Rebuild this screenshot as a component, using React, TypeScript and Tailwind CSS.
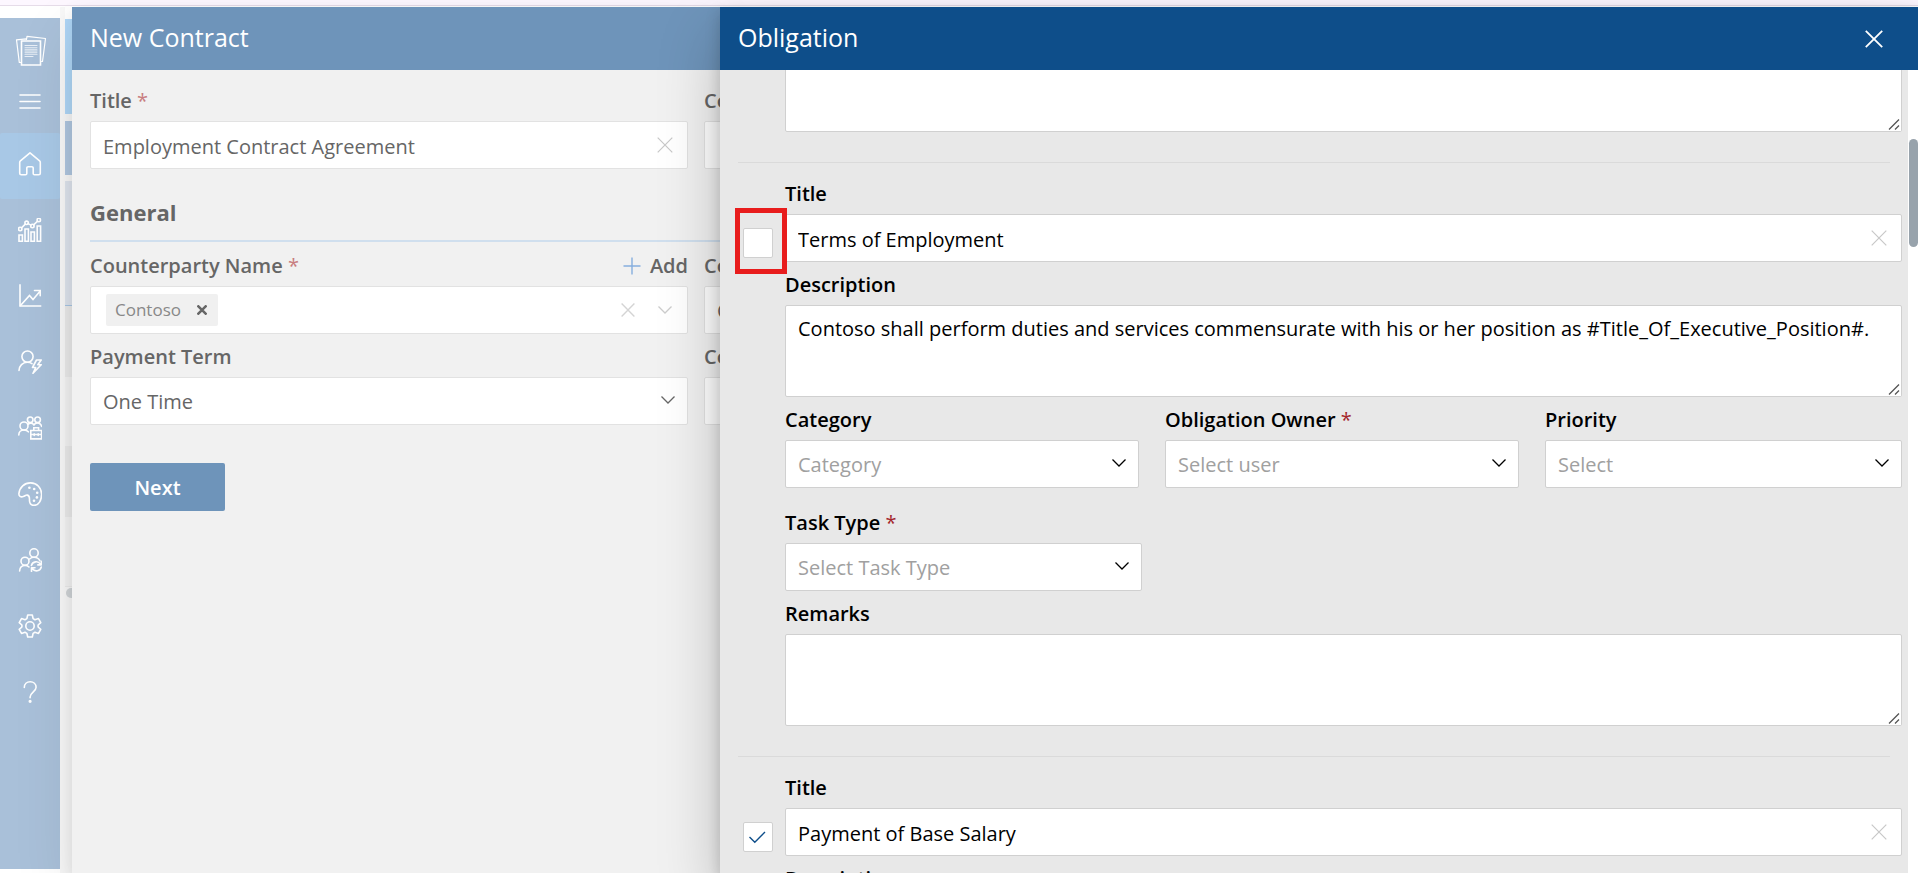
import { useId, type ReactNode } from 'react';

const stroke = {
  fill: 'none',
  stroke: 'currentColor',
  strokeWidth: 1.6,
  strokeLinecap: 'round' as const,
  strokeLinejoin: 'round' as const,
};

function Icon({ children }: { children: ReactNode }) {
  return (
    <svg width="24" height="24" viewBox="0 0 24 24" aria-hidden="true" {...stroke}>
      {children}
    </svg>
  );
}

const navItems: { label: string; icon: ReactNode; active?: boolean }[] = [
  {
    label: 'Home',
    active: true,
    icon: (
      <path d="M12 .8 2.4 8.9a2 2 0 0 0-.7 1.6v10.700a1.6 1.6 0 0 0 1.6 1.6h4.2a1.3 1.3 0 0 0 1.3-1.3v-5.500a1.3 1.3 0 0 1 1.3-1.3h3.800a1.3 1.3 0 0 1 1.3 1.3v5.500a1.3 1.3 0 0 0 1.3 1.3h4.2a1.6 1.6 0 0 0 1.6-1.6V10.500a2 2 0 0 0-.7-1.6Z" />
    ),
  },
  {
    label: 'Analytics',
    icon: (
      <>
        <path d="M1 17h3.4v6.2H1zM7 11h3.4v12.2H7zM13 14h3.4v9.2H13zM19.2 8h3.4v15.2h-3.4z" strokeLinejoin="miter" />
        <circle cx="2.2" cy="11" r="1.7" />
        <circle cx="8.6" cy="4.8" r="1.7" />
        <circle cx="14.4" cy="8" r="1.7" />
        <circle cx="20.8" cy="2" r="1.7" />
        <path d="m3.5 9.8 3.8-3.6M10.1 5.6l2.8 1.5M15.6 6.8l4-3.6" />
      </>
    ),
  },
  {
    label: 'Trends',
    icon: (
      <>
        <path d="M2 1v21h20.500" strokeLinecap="square" strokeLinejoin="miter" />
        <path d="m2.500 21.500 9-10 3.500 4L22 7.200M16.500 6.500h5.700v5.300" strokeLinejoin="miter" />
      </>
    ),
  },
  {
    label: 'User actions',
    icon: (
      <>
        <circle cx="9.5" cy="6.6" r="5.6" />
        <path d="M1 20.5c.2-4.700 3.600-8.300 8.300-8.300 2 0 3.400.5 4.700 1.500" />
        <path d="m18.500 10-4 7.500h3.200L15 23.300l8.200-8.600h-3.400l3.400-4.700z" />
      </>
    ),
  },
  {
    label: 'Team projects',
    icon: (
      <>
        <circle cx="6" cy="10" r="4" />
        <path d="M.8 19c0-3 2.200-5 5.200-5 2 0 3.300.6 4.300 1.800" />
        <circle cx="12.200" cy="3.800" r="2.800" />
        <circle cx="19.600" cy="3.800" r="2.800" />
        <path d="M10 8.200c3-1.800 5-.6 5.900.8 1-1.800 3-2.600 5-1.800 1.600.6 2.500 1.800 2.700 3.200" />
        <path d="M12.800 14.500h10.800v8.400H12.800zM15.800 14.300v-2.600h4.800v2.600M12.800 18.500h10.800M16.200 17.800v1.600M20.200 17.800v1.600" strokeLinejoin="miter" />
      </>
    ),
  },
  {
    label: 'Appearance',
    icon: (
      <>
        <path d="M.9 11.600C1.500 5.200 6.500.8 12.600.9 18.900 1 23.600 6 23.600 12.300c0 5.900-2.900 11.100-7.600 11.100-3.500 0-4.700-2.400-4.500-5.800.1-2.700-.5-4.100-2.100-4.500-1.500-.4-2.400.9-4.200 1.500-2.500.8-4.500-.6-4.300-3Z" />
        <g fill="currentColor" stroke="none">
          <circle cx="11.400" cy="5.700" r="1.300" />
          <circle cx="16.200" cy="7" r="1.300" />
          <circle cx="19.200" cy="10.700" r="1.300" />
          <circle cx="18.900" cy="15.400" r="1.300" />
          <circle cx="16" cy="18.700" r="1.300" />
        </g>
      </>
    ),
  },
  {
    label: 'User sync',
    icon: (
      <>
        <circle cx="7" cy="13.200" r="4" />
        <path d="M1.600 23c.1-3.400 2.400-5.600 5.400-5.600 1.800 0 3 .6 4 1.600" />
        <circle cx="16" cy="5" r="4.200" />
        <path d="M11.600 11c1.200-1.100 2.700-1.700 4.400-1.700 2.700 0 4.800 1.300 6 3.500" />
        <path d="M13.400 17.500a5 5 0 0 1 9-1.400M23.300 13.300v3.600h-3.500M23.300 19a5 5 0 0 1-8.900 1.800M13.500 23.400v-3.600H17" />
      </>
    ),
  },
  {
    label: 'Settings',
    icon: (
      <>
        <path d="M9.700 1h4.600l.8 3.600 1.900 1.100 3.500-1.100 2.300 4-2.700 2.400v2l2.700 2.400-2.300 4-3.500-1.100-1.900 1.100-.8 3.600H9.700l-.8-3.600L7 18.300l-3.500 1.100-2.300-4L3.900 13v-2L1.200 8.600l2.300-4L7 5.700l1.900-1.100z" />
        <circle cx="12" cy="12" r="4.200" />
      </>
    ),
  },
  {
    label: 'Help',
    icon: (
      <>
        <path d="M6.300 7.500C6.300 4 8.900 1.700 12.200 1.700s5.900 2.300 5.900 5.500c0 4.600-6 5.300-6 9.800v.7" />
        <circle cx="12.100" cy="21.300" r=".8" fill="currentColor" />
      </>
    ),
  },
];

function Cross({ size = 16, width = 1.2 }: { size?: number; width?: number }) {
  return (
    <svg width={size} height={size} viewBox="0 0 16 16" fill="none" stroke="currentColor" strokeWidth={width} aria-hidden="true">
      <path d="m.7.7 14.600 14.600M15.300.7.7 15.300" />
    </svg>
  );
}

function Chevron({ className = '' }: { className?: string }) {
  return (
    <svg width="16" height="10" viewBox="0 0 16 10" fill="none" stroke="currentColor" strokeWidth="1.300" className={className} aria-hidden="true">
      <path d="m1.500 1.500 6.500 6.500 6.500-6.500" />
    </svg>
  );
}

function Label({ htmlFor, text, required }: { htmlFor?: string; text: string; required?: boolean }) {
  return (
    <label htmlFor={htmlFor} className="block h-[43px] pt-[9px] text-[20px] leading-[27px] font-semibold whitespace-nowrap">
      {text}
      {required && <span className="font-normal text-[#a4262c]"> *</span>}
    </label>
  );
}

const box = 'w-full rounded-xs border border-[#d0d0d0] bg-white text-[20px] outline-none';

function TextField({ label, value, required }: { label: string; value: string; required?: boolean }) {
  const id = useId();
  return (
    <div>
      <Label htmlFor={id} text={label} required={required} />
      <div className={`${box} flex h-12 items-center`}>
        <input id={id} defaultValue={value} className="h-full min-w-0 flex-1 pt-[2px] pl-3 outline-none" />
        <button type="button" aria-label={`Clear ${label}`} className="mr-[14px] text-[#c8c8c8]">
          <Cross />
        </button>
      </div>
    </div>
  );
}

function SelectField({ label, value, required, muted = true }: { label: string; value: string; required?: boolean; muted?: boolean }) {
  const id = useId();
  return (
    <div>
      <Label htmlFor={id} text={label} required={required} />
      <div className="relative">
        <select id={id} className={`${box} block h-12 appearance-none pt-[2px] pr-10 pl-3 ${muted ? 'text-[#a0a0a0]' : ''}`}>
          <option>{value}</option>
        </select>
        <Chevron className="pointer-events-none absolute top-[18px] right-3" />
      </div>
    </div>
  );
}

function TextArea({ id, label, value = '' }: { id?: string; label?: string; value?: string }) {
  return (
    <div className="relative w-full shrink-0">
      <textarea id={id} aria-label={label} defaultValue={value} className={`${box} block h-[92px] resize-y px-3 py-2 leading-[30px]`} />
      <svg width="14" height="14" viewBox="0 0 14 14" className="pointer-events-none absolute right-px bottom-px bg-white" stroke="#555555" strokeWidth="1.300" aria-hidden="true">
        <path d="M2 12.500 12 2.500M8 12.500 12 8.500" />
      </svg>
    </div>
  );
}

function AreaField({ label, value }: { label: string; value?: string }) {
  const id = useId();
  return (
    <div>
      <Label htmlFor={id} text={label} />
      <TextArea id={id} value={value} />
    </div>
  );
}

function Obligation({ title, description, checked, highlighted }: { title: string; description: string; checked?: boolean; highlighted?: boolean }) {
  return (
    <section className="flex pt-2 pb-[30px]">
      <div className="w-[47px] shrink-0 pt-[57px] pl-[5px]">
        <div className="relative size-[30px]">
          <input
            type="checkbox"
            aria-label={`Include ${title}`}
            defaultChecked={checked}
            className="peer block size-[30px] appearance-none rounded-xs border border-[#d0d0d0] bg-white"
          />
          <svg
            viewBox="0 0 30 30"
            className="pointer-events-none absolute inset-0 hidden size-[30px] fill-none stroke-[#0e4e8a] peer-checked:block"
            strokeWidth="1.400"
            aria-hidden="true"
          >
            <path d="m6.500 15 5.300 5.300L22 10" />
          </svg>
          {highlighted && <div className="pointer-events-none absolute -top-5 -left-2 h-[66px] w-[52px] border-[5px] border-[#e81c1c]" />}
        </div>
      </div>
      <div className="min-w-0 flex-1">
        <TextField label="Title" value={title} />
        <AreaField label="Description" value={description} />
        <div className="grid grid-cols-[354fr_354fr_357fr] gap-x-[26px]">
          <SelectField label="Category" value="Category" />
          <SelectField label="Obligation Owner" value="Select user" required />
          <SelectField label="Priority" value="Select" />
        </div>
        <div className="mt-3 w-[32%]">
          <SelectField label="Task Type" value="Select Task Type" required />
        </div>
        <AreaField label="Remarks" />
      </div>
    </section>
  );
}

function Sidebar() {
  return (
    <nav className="mt-[11px] mb-1 flex w-[60px] shrink-0 flex-col items-center bg-[#a9c0d9] text-white">
      <svg width="32" height="32" viewBox="0 0 32 32" className="mt-[17px] ml-px" aria-hidden="true" {...stroke} strokeWidth="1.200">
        <path d="M6 27.500H4.300L1.500 4.800l9.500-1M11.500 4.500l.5-3.200L30.500 3.500l-3 23H26.500" />
        <path d="M6.500 6h19v24h-19z" strokeWidth="1.600" strokeLinejoin="miter" />
        <path d="M10 10.500h12M10 12.700h12M10 14.900h12M10 17.100h12M10 19.300h12M10 21.500h8" strokeWidth="1.100" strokeOpacity=".75" />
      </svg>
      <button type="button" aria-label="Menu" className="mt-[17px] flex h-[34px] w-full items-center justify-center">
        <svg width="24" height="18" viewBox="0 0 24 18" {...stroke} aria-hidden="true">
          <path d="M2 3h20M2 9.500h20M2 16h20" />
        </svg>
      </button>
      <ul className="mt-[15px] w-full">
        {navItems.map((item) => (
          <li key={item.label}>
            <a
              href="#"
              aria-label={item.label}
              className={`flex h-[66px] items-center justify-center rounded-xs pb-1 ${item.active ? 'bg-[#a8c8e6]' : ''}`}
            >
              <Icon>{item.icon}</Icon>
            </a>
          </li>
        ))}
      </ul>
    </nav>
  );
}

function BackgroundEdge() {
  return (
    <div className="w-3 shrink-0 bg-[#f8f8f8] pl-[5px]" aria-hidden="true">
      <div className="h-3 bg-white" />
      <div className="h-[95px] bg-[#b0d8f8]" />
      <div className="mt-[7px] h-[54px] bg-[#b0c7e1]" />
      <div className="mt-[6px] h-[125px] border-b border-[#a8c6e4] bg-[#dfe5ee]" />
      <div className="h-[71px] bg-[#ebebeb]" />
      <div className="h-[69px] bg-[#f4f4f4]" />
      <div className="h-[71px] bg-[#ebebeb]" />
      <div className="h-[70px] border-b border-[#ebebeb] bg-[#f4f4f4]" />
      <div className="mt-px ml-px h-[10px] rounded-l-full bg-[#d0d4d7]" />
    </div>
  );
}

function ContractPanel() {
  return (
    <section className="z-10 w-[648px] shrink-0 overflow-hidden bg-[#f1f1f1] text-[#666666] shadow-[0_26px_58px_0_rgba(0,0,0,0.1),0_5px_14px_0_rgba(0,0,0,0.09)]">
      <header className="flex h-[63px] items-center bg-[#6e94ba] px-[18px] pb-[2px]">
        <h1 className="text-[25px] whitespace-nowrap text-white">New Contract</h1>
      </header>
      <form className="w-[1230px] pt-2 pl-[18px] [&_.border]:border-[#e2e2e2] [&_label>span]:text-[#c87d80]">
        <div className="grid grid-cols-[598px_598px] gap-x-4">
          <TextField label="Title" value="Employment Contract Agreement" required />
          <TextField label="Contract Type" value="" />
        </div>
        <h2 className="mt-[26px] h-[47px] border-b-2 border-[#d0dfee] text-[22px] leading-[35px] font-bold">General</h2>
        <div className="mt-px grid grid-cols-[598px_598px] gap-x-4">
          <div>
            <div className="flex items-start justify-between">
              <Label text="Counterparty Name" required />
              <button type="button" className="flex items-center gap-[9px] pt-[9px] text-[20px] leading-[27px] font-semibold">
                <svg width="18" height="18" viewBox="0 0 18 18" fill="none" stroke="#86aede" strokeWidth="1.400" aria-hidden="true">
                  <path d="M9 .5v17M.5 9h17" />
                </svg>
                Add
              </button>
            </div>
            <div className={`${box} flex h-12 items-center pr-[14px] pl-[15px]`}>
              <span className="flex h-8 items-center gap-4 rounded-xs bg-[#f0f0f0] px-[9px] text-[17px] text-[#888888]">
                Contoso
                <button type="button" aria-label="Remove Contoso" className="mr-[2px] text-[#666666]">
                  <Cross size={10} width={4} />
                </button>
              </span>
              <button type="button" aria-label="Clear counterparty" className="mr-[22px] ml-auto text-[#d4d4d4]">
                <Cross size={14} width={1.600} />
              </button>
              <Chevron className="text-[#cccccc]" />
            </div>
          </div>
          <SelectField label="Contract Stage" value="Closed" muted={false} />
          <SelectField label="Payment Term" value="One Time" muted={false} />
          <SelectField label="Contract Value" value="" muted={false} />
        </div>
        <button type="submit" className="mt-[38px] h-12 w-[135px] rounded-xs bg-[#6e94ba] pt-[2px] text-[20px] font-semibold text-white">
          Next
        </button>
      </form>
    </section>
  );
}

function ObligationPanel() {
  return (
    <section className="z-20 flex min-w-0 flex-1 flex-col bg-[#e8e8e8] text-black shadow-[0_26px_58px_0_rgba(0,0,0,0.22),0_5px_14px_0_rgba(0,0,0,0.18)]">
      <header className="flex h-[63px] shrink-0 items-center justify-between bg-[#0e4e8a] pr-[35px] pl-[18px] text-white">
        <h1 className="pb-[2px] text-[25px]">Obligation</h1>
        <button type="button" aria-label="Close">
          <Cross size={18} width={1.600} />
        </button>
      </header>
      <div className="flex min-h-0 flex-1">
        <div className="min-w-0 flex-1 overflow-hidden pr-[6px] pl-[18px]">
          <div className="flex h-[62px] items-end overflow-hidden pl-[47px]">
            <TextArea label="Remarks" />
          </div>
          <hr className="mt-[30px] mr-3 border-[#dadada]" />
          <Obligation
            title="Terms of Employment"
            description="Contoso shall perform duties and services commensurate with his or her position as #Title_Of_Executive_Position#."
            highlighted
          />
          <hr className="mr-3 border-[#dadada]" />
          <Obligation title="Payment of Base Salary" description="" checked />
        </div>
        <div className="w-[10px] shrink-0 bg-white pt-[69px] pl-px" aria-hidden="true">
          <div className="h-[108px] rounded-full bg-[#98a3ac]" />
        </div>
      </div>
    </section>
  );
}

export default function App() {
  return (
    <div className="flex h-screen flex-col overflow-hidden bg-white font-['Open_Sans','Noto_Sans',sans-serif]">
      <div className="mb-px h-[6px] shrink-0 border-b border-[#e6dce9] bg-[#fdf7ff]" />
      <main className="flex min-h-0 flex-1">
        <Sidebar />
        <BackgroundEdge />
        <ContractPanel />
        <ObligationPanel />
      </main>
    </div>
  );
}
